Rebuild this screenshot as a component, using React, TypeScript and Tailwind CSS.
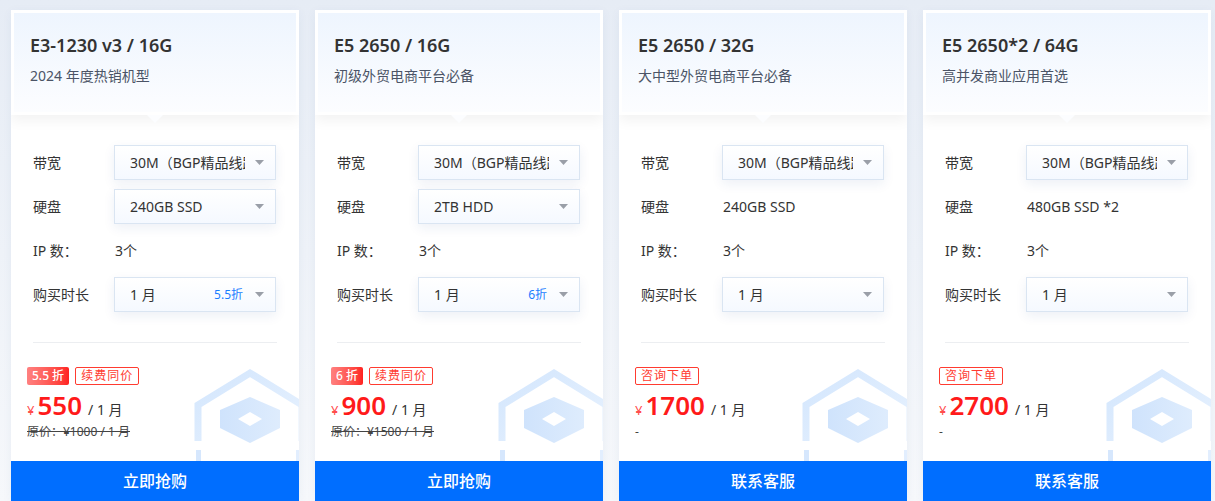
import React from "react";

type Row =
  | { label: string; kind: "select"; value: string; discount?: string }
  | { label: string; kind: "text"; value: string };

type Plan = {
  title: string;
  sub: string;
  rows: Row[];
  discountBadge?: string;
  tag: string;
  price: string;
  original: string | null;
  button: string;
};

const plans: Plan[] = [
  {
    title: "E3-1230 v3 / 16G",
    sub: "2024 年度热销机型",
    rows: [
      { label: "带宽", kind: "select", value: "30M（BGP精品线路）" },
      { label: "硬盘", kind: "select", value: "240GB SSD" },
      { label: "IP 数：", kind: "text", value: "3个" },
      { label: "购买时长", kind: "select", value: "1 月", discount: "5.5折" },
    ],
    discountBadge: "5.5 折",
    tag: "续费同价",
    price: "550",
    original: "原价：¥1000 / 1 月",
    button: "立即抢购",
  },
  {
    title: "E5 2650 / 16G",
    sub: "初级外贸电商平台必备",
    rows: [
      { label: "带宽", kind: "select", value: "30M（BGP精品线路）" },
      { label: "硬盘", kind: "select", value: "2TB HDD" },
      { label: "IP 数：", kind: "text", value: "3个" },
      { label: "购买时长", kind: "select", value: "1 月", discount: "6折" },
    ],
    discountBadge: "6 折",
    tag: "续费同价",
    price: "900",
    original: "原价：¥1500 / 1 月",
    button: "立即抢购",
  },
  {
    title: "E5 2650 / 32G",
    sub: "大中型外贸电商平台必备",
    rows: [
      { label: "带宽", kind: "select", value: "30M（BGP精品线路）" },
      { label: "硬盘", kind: "text", value: "240GB SSD" },
      { label: "IP 数：", kind: "text", value: "3个" },
      { label: "购买时长", kind: "select", value: "1 月" },
    ],
    tag: "咨询下单",
    price: "1700",
    original: null,
    button: "联系客服",
  },
  {
    title: "E5 2650*2 / 64G",
    sub: "高并发商业应用首选",
    rows: [
      { label: "带宽", kind: "select", value: "30M（BGP精品线路）" },
      { label: "硬盘", kind: "text", value: "480GB SSD *2" },
      { label: "IP 数：", kind: "text", value: "3个" },
      { label: "购买时长", kind: "select", value: "1 月" },
    ],
    tag: "咨询下单",
    price: "2700",
    original: null,
    button: "联系客服",
  },
];

function Watermark() {
  return (
    <svg
      className="absolute left-[179px] top-[350px] pointer-events-none"
      width="120"
      height="101"
      viewBox="0 0 120 101"
    >
      <defs>
        <linearGradient id="wmg" x1="0" y1="0" x2="1" y2="1">
          <stop offset="0" stopColor="#d3e6fd" />
          <stop offset="1" stopColor="#e8f2fe" />
        </linearGradient>
        <linearGradient id="wmi" x1="0" y1="0" x2="1" y2="0">
          <stop offset="0" stopColor="#cfe3fc" />
          <stop offset="1" stopColor="#deecfd" />
        </linearGradient>
      </defs>
      <polyline
        points="8,81 8,45 60,13 112,45 112,81"
        fill="none"
        stroke="url(#wmg)"
        strokeWidth="7"
        strokeLinejoin="miter"
      />
      <rect x="6" y="90" width="5" height="11" fill="#d6e7fd" />
      <rect x="106" y="90" width="4" height="11" fill="#e2eefe" />
      <path
        fillRule="evenodd"
        fill="url(#wmi)"
        d="M60 37 L90 50 L90 68 L60 83 L30 68 L30 50 Z M60 52 L72 59 L60 66 L48 59 Z"
      />
    </svg>
  );
}

function Chevron() {
  return (
    <svg width="9" height="5" viewBox="0 0 9 5" className="shrink-0">
      <path d="M0 0 L9 0 L4.5 5 Z" fill="#9a9fa8" />
    </svg>
  );
}

function Card({ p }: { p: Plan }) {
  return (
    <div className="relative w-[288px] h-[491px] bg-white overflow-hidden flex flex-col shadow-[0_2px_10px_rgba(40,80,140,0.05)]">
      <div className="relative z-10 h-[105px] p-[3px] bg-white shadow-[0_6px_12px_rgba(0,0,0,0.05)]">
        <div className="h-full bg-gradient-to-b from-[#eef5fe] to-[#fcfdff] pl-4 pt-[20px]">
          <div className="text-[18px] leading-[24px] font-semibold text-[#333]">{p.title}</div>
          <div className="mt-[9px] text-[14px] leading-[20px] text-[#4b5466]">{p.sub}</div>
        </div>
        <div className="absolute left-1/2 -translate-x-1/2 top-full w-0 h-0 border-x-[8px] border-x-transparent border-t-[8px] border-t-[#fcfdff]" />
      </div>

      <div className="px-[22px] pt-[30px] flex flex-col gap-[9px]">
        {p.rows.map((r, i) => (
          <div key={i} className="flex items-center h-[35px]">
            <div className="w-[81px] shrink-0 text-[14px] text-[#333]">{r.label}</div>
            {r.kind === "select" ? (
              <div className="w-[162px] h-[35px] border border-[#dae5f2] bg-gradient-to-b from-[#ffffff] to-[#f5f9ff] shadow-[0_4px_12px_rgba(30,70,140,0.08)] flex items-center pl-[15px] pr-[11px]">
                <div className="flex-1 min-w-0 overflow-hidden whitespace-nowrap text-[14px] text-[#333] mr-[10px]">
                  {r.value}
                </div>
                {r.discount && (
                  <span className="text-[12px] text-[#1a7dff] mr-[12px] whitespace-nowrap">{r.discount}</span>
                )}
                <Chevron />
              </div>
            ) : (
              <div className="text-[14px] text-[#333] pl-px">{r.value}</div>
            )}
          </div>
        ))}
        <div className="mt-[21px] h-px bg-[#eceef1]" />
      </div>

      <Watermark />

      <div className="relative px-4 mt-[24px] flex-1">
        <div className="flex items-center gap-[6px] h-[18px]">
          {p.discountBadge && (
            <span className="h-[18px] px-[5px] rounded-[2px] bg-gradient-to-r from-[#ff8080] to-[#ff2020] text-white text-[12px] leading-[18px] font-medium">
              {p.discountBadge}
            </span>
          )}
          <span className="h-[18px] px-[5px] rounded-[2px] border border-[#ff3b30] text-[#ff3b30] text-[12px] leading-[16px] tracking-[1px]">
            {p.tag}
          </span>
        </div>
        <div className="mt-[5px] flex items-baseline h-[30px]">
          <span className="text-[13px] text-[#ff4d4d] mr-[3px]">¥</span>
          <span className="text-[26px] leading-[30px] font-semibold text-[#ff1a1a]">{p.price}</span>
          <span className="ml-[6px] text-[14px] text-[#333]">/ 1 月</span>
        </div>
        <div className="mt-[3px] h-[18px] text-[12px] leading-[18px] text-[#444]">
          {p.original ? <span className="line-through">{p.original}</span> : <span>-</span>}
        </div>
      </div>

      <button className="relative h-[40px] w-full bg-[#006eff] text-white text-[16px] font-medium">
        {p.button}
      </button>
    </div>
  );
}

export default function App() {
  return (
    <div
      className="w-[1215px] h-[501px] overflow-hidden bg-gradient-to-b from-[#e6ecf5] to-[#f6f8fb] flex gap-4 pl-[11px] pt-[10px]"
      style={{ fontFamily: '"Noto Sans", "Noto Sans CJK SC", sans-serif' }}
    >
      {plans.map((p, i) => (
        <Card key={i} p={p} />
      ))}
    </div>
  );
}
